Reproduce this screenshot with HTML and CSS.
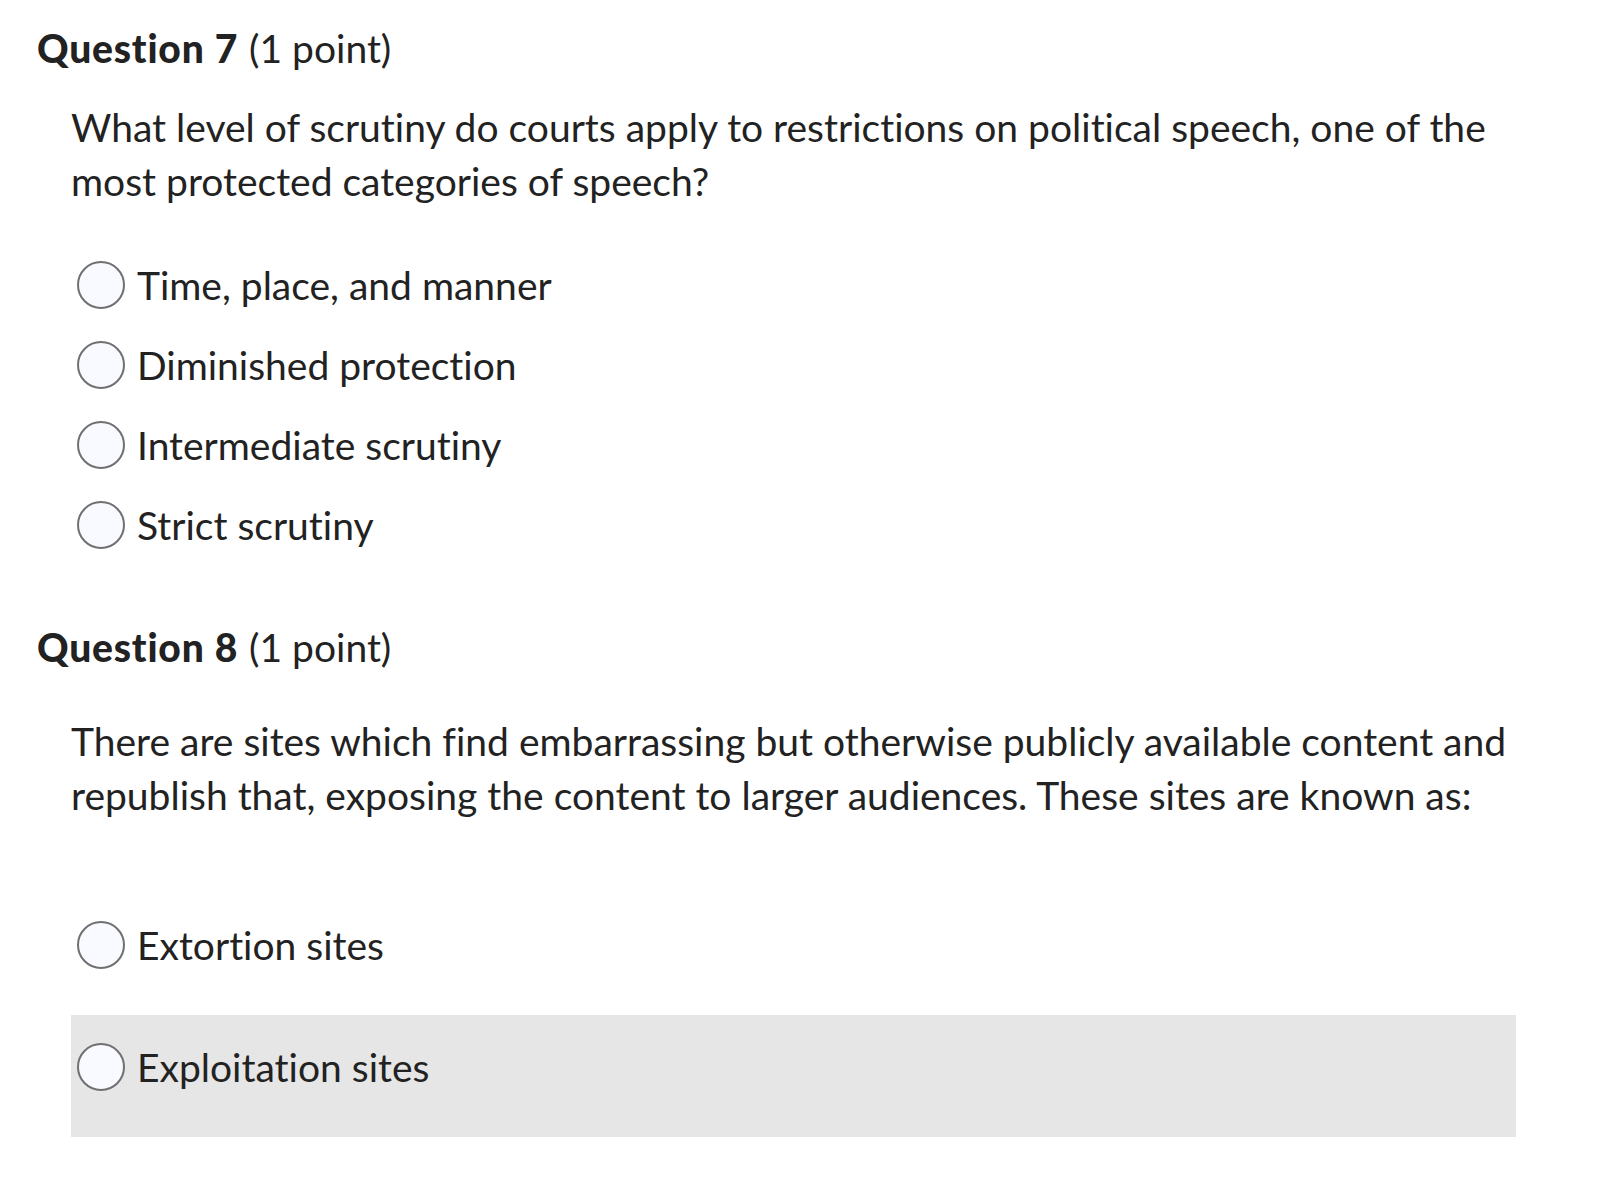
FILE: index.html
```html
<!DOCTYPE html>
<html lang="en">
<head>
<meta charset="utf-8">
<title>Quiz</title>
<link rel="stylesheet" href="styles.css">
</head>
<body>
<main class="quiz">
  <section class="question q7">
    <h2 class="q-title"><strong>Question 7</strong> (1 point)</h2>
    <p class="q-text">What level of scrutiny do courts apply to restrictions on political speech, one of the most protected categories of speech?</p>
    <ul class="options compact">
      <li class="option"><span class="radio"></span><span class="label">Time, place, and manner</span></li>
      <li class="option"><span class="radio"></span><span class="label">Diminished protection</span></li>
      <li class="option"><span class="radio"></span><span class="label">Intermediate scrutiny</span></li>
      <li class="option"><span class="radio"></span><span class="label">Strict scrutiny</span></li>
    </ul>
  </section>
  <section class="question q8">
    <h2 class="q-title"><strong>Question 8</strong> (1 point)</h2>
    <p class="q-text">There are sites which find embarrassing but otherwise publicly available content and republish that, exposing the content to larger audiences. These sites are known as:</p>
    <ul class="options tall">
      <li class="option"><span class="radio"></span><span class="label">Extortion sites</span></li>
      <li class="option hover"><span class="radio"></span><span class="label">Exploitation sites</span></li>
    </ul>
  </section>
</main>
</body>
</html>
```

FILE: styles.css
```css
html, body {
  margin: 0;
  padding: 0;
  background: #ffffff;
}

body {
  font-family: Lato, "Open Sans", "Liberation Sans", sans-serif;
  color: #222222;
  font-size: 39px;
  line-height: 54px;
  font-variant-ligatures: none;
  font-feature-settings: "liga" 0, "clig" 0;
}

.quiz {
  padding: 21px 0 0 37px;
  width: 1479px;
}

.q-title {
  margin: 0;
  font-size: 39px;
  line-height: 54px;
  font-weight: 400;
}

.q-title strong {
  font-weight: 900;
  letter-spacing: 0.8px;
  margin-right: 1px;
}

.q-text {
  margin: 25px 0 0 34px;
  width: 1440px;
}

.q8 .q-text {
  margin-top: 40px;
}

.options {
  list-style: none;
  margin: 0 0 0 34px;
  padding: 0;
}

.compact {
  margin-top: 37px;
  margin-bottom: 55px;
}

.tall {
  margin-top: 71px;
}

.option {
  display: flex;
  align-items: center;
  gap: 12px;
  padding-left: 6px;
}

.compact .option {
  height: 80px;
}

.tall .option {
  height: 122px;
  align-items: flex-start;
  padding-top: 25px;
  box-sizing: border-box;
}

.option.hover {
  background: #e6e6e6;
}

.radio {
  flex: none;
  width: 44px;
  height: 44px;
  border: 2px solid #707070;
  border-radius: 50%;
  background: #f8faff;
}

.tall .radio {
  margin-top: 3px;
}

.label {
  white-space: nowrap;
}
```
